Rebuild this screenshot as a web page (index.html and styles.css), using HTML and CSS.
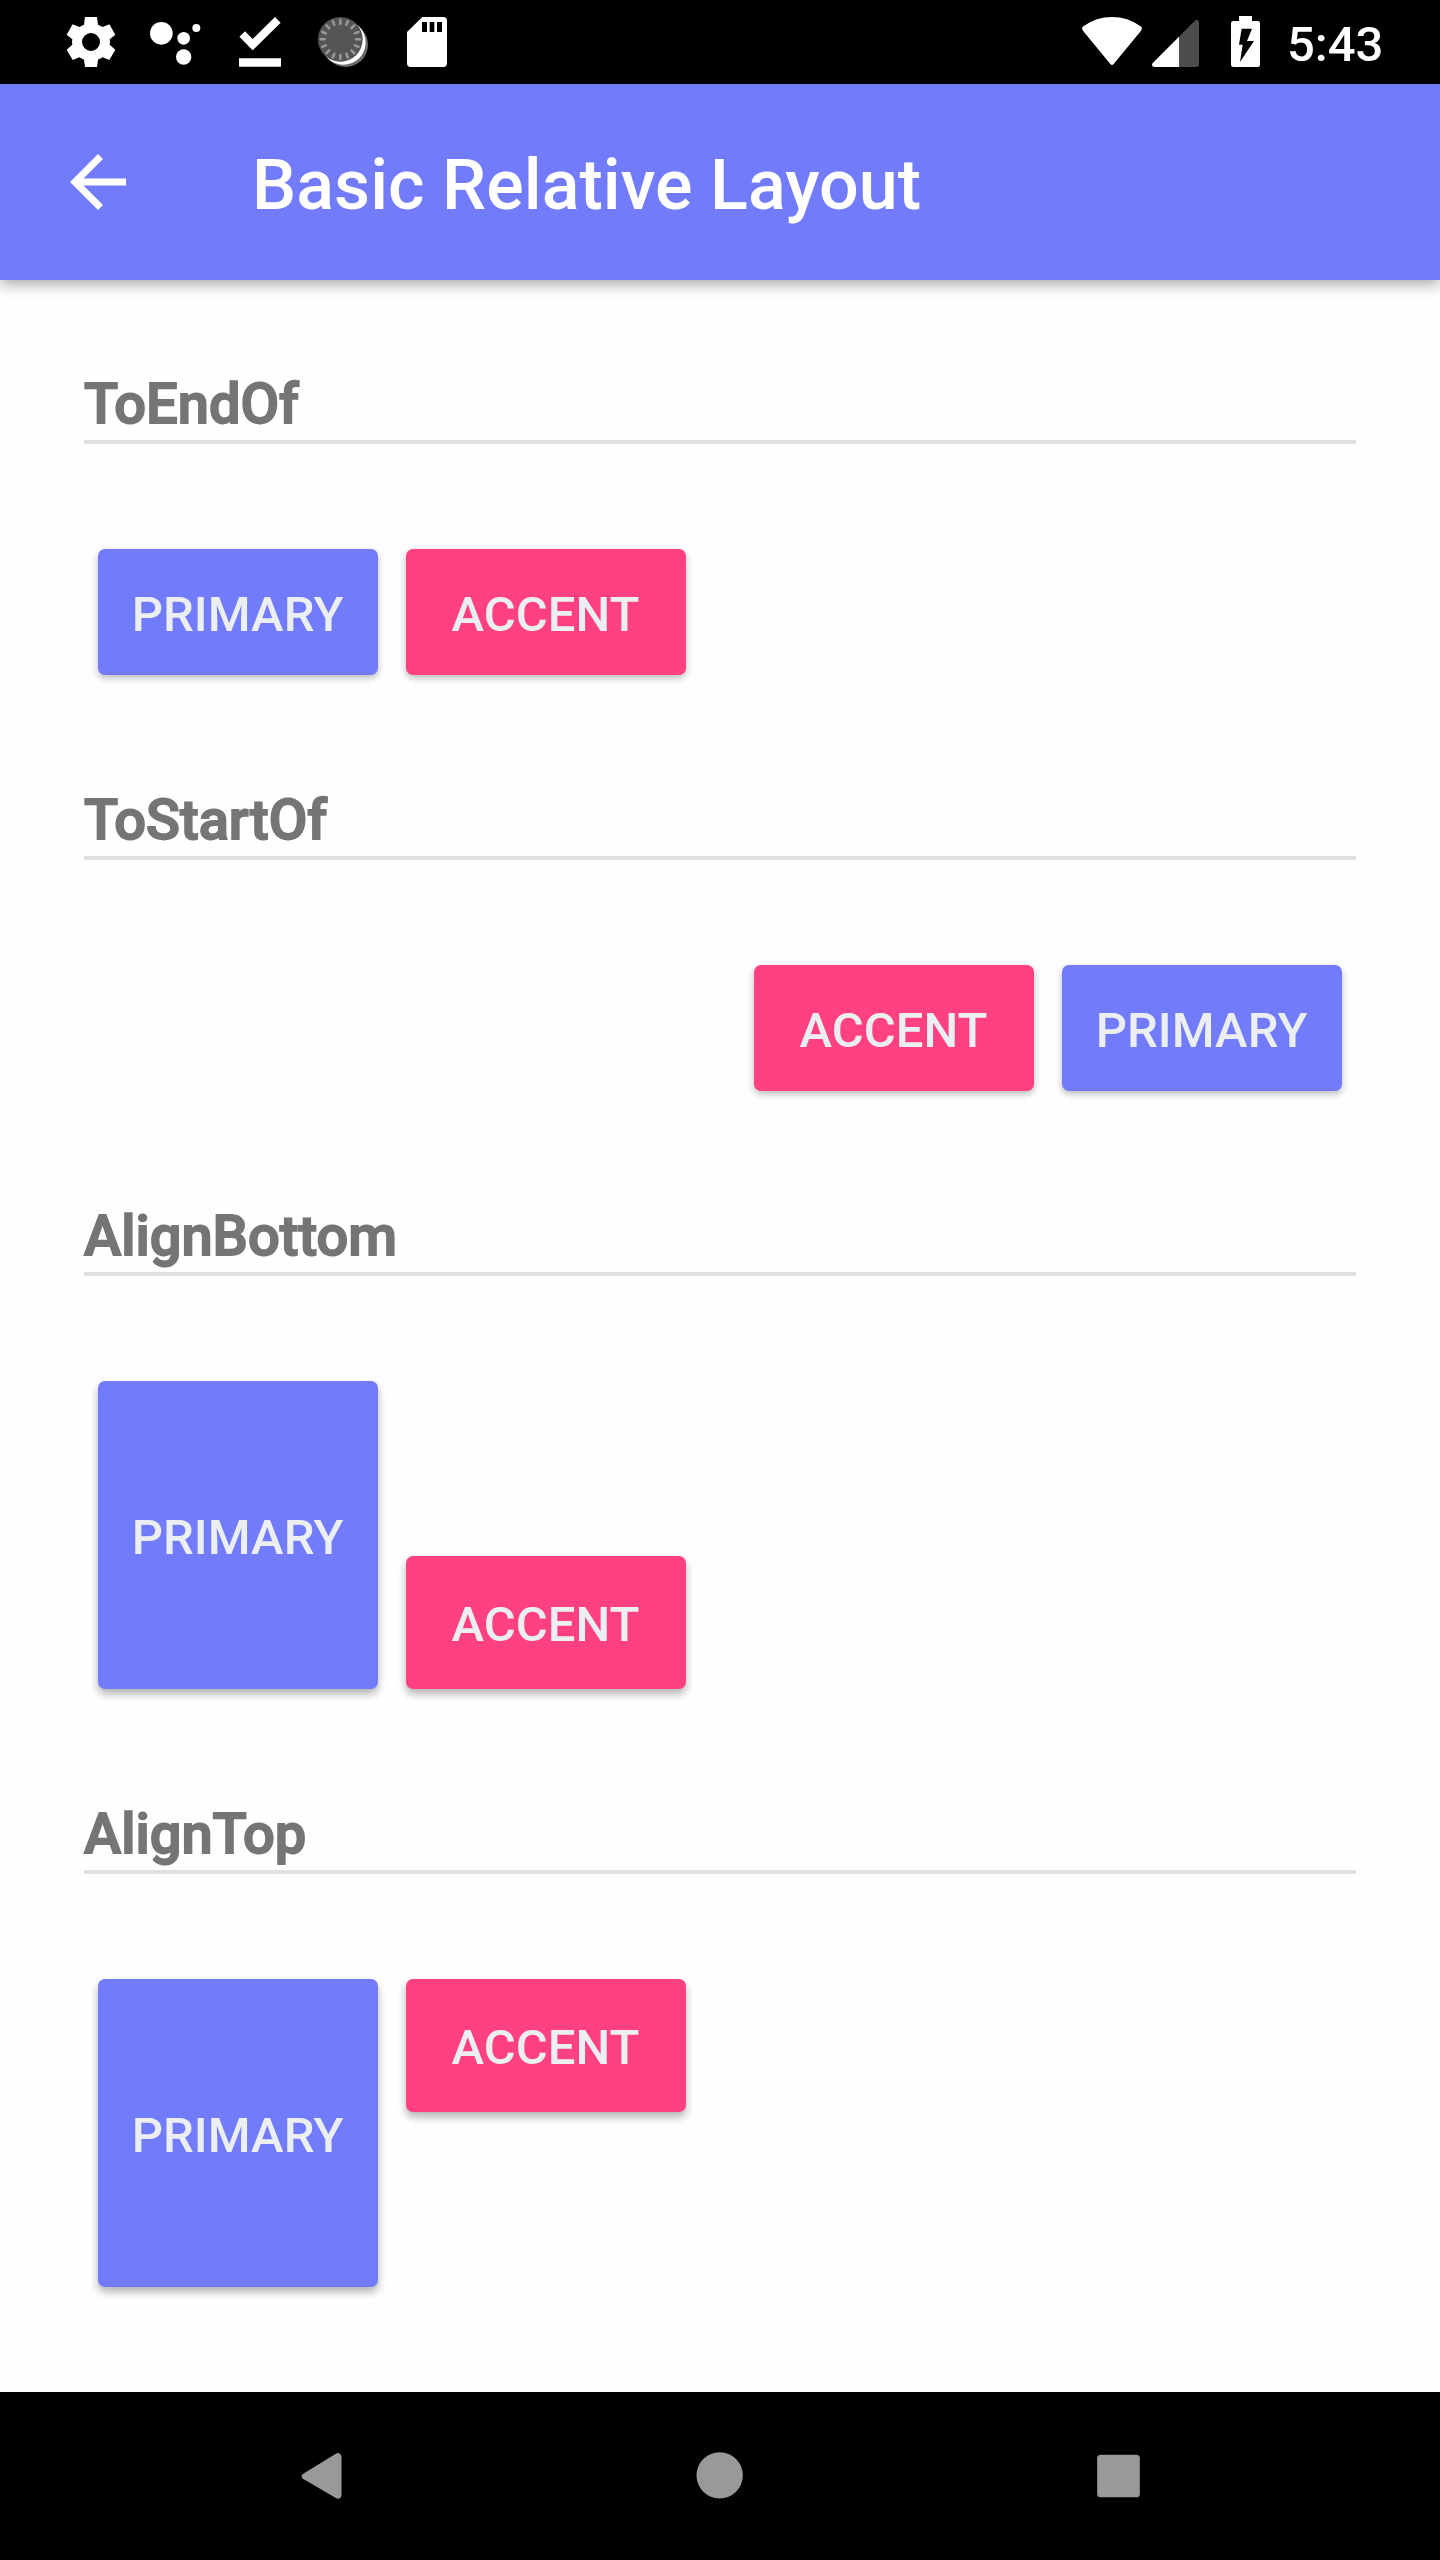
FILE: index.html
```html
<!DOCTYPE html>
<html lang="en">
<head>
<meta charset="utf-8">
<title>Basic Relative Layout</title>
<link rel="stylesheet" href="styles.css">
</head>
<body>
<header class="status">
  <div class="notifications">
    <svg class="note" viewBox="27 0 252 252"><path fill="#fff" fill-rule="evenodd" d="M135 51H171L174 74 188 81 208 73 226 104 209 118 210 126 209 134 226 149 208 180 188 172 174 179 171 201H135L132 179 118 172 98 180 80 149 97 134 96 126 97 118 80 104 98 73 118 81 132 74ZM153 99A27 27 0 1 0 153 153A27 27 0 1 0 153 99Z"/></svg>
    <svg class="note" viewBox="279 0 252 252" fill="#fff"><circle cx="364" cy="100" r="34"/><circle cx="431" cy="115" r="19"/><circle cx="469" cy="84" r="12"/><circle cx="431" cy="171" r="23"/></svg>
    <svg class="note" viewBox="531 0 252 252" fill="#fff"><path d="M598 110L615 94 638 117 705 51 722 68 638 151ZM597 175H723V200H597Z"/></svg>
    <svg class="note" viewBox="63 0 252 252">
      <circle cx="197" cy="134" r="67" fill="#6b6b6b"/><circle cx="190" cy="127" r="67" fill="#fff"/><circle cx="181" cy="118" r="67" fill="#555"/>
      <g stroke="#999" stroke-width="7.5" stroke-linecap="round">
        <g id="ticks"><path id="tick" d="M228 118H240M134 118H122M181 165V177M181 71V59"/><use href="#tick" transform="rotate(22.5 181 118)"/></g>
        <use href="#ticks" transform="rotate(45 181 118)"/>
      </g>
    </svg>
    <svg class="note" viewBox="315 0 252 252"><path fill="#fff" d="M427 51H490Q501 51 501 62V190Q501 201 490 201H392Q381 201 381 190V96Z"/><path d="M426 66H441V96H426ZM449 66H463V96H449ZM471 66H486V96H471Z"/></svg>
  </div>
  <div class="system">
    <svg class="signal" viewBox="60 0 192 252"><path fill="#fff" d="M70 79Q108 51 156 51T242 79Q249 84 243 92L161 192Q156 198 151 192L69 92Q63 84 70 79Z"/></svg>
    <svg class="signal" viewBox="252 0 192 252"><path fill="#4d4d4d" d="M357 110L403 64Q409 58 414 61 417 63 417 68V194Q417 201 410 201H357Z"/><path fill="#fff" d="M357 110V201H284Q277 201 276 196 275 192 279 188Z"/></svg>
    <svg class="battery" viewBox="480 0 144 252"><path fill="#fff" d="M537 48H576V63H593Q600 63 600 70V194Q600 201 593 201H520Q513 201 513 194V70Q513 63 520 63H537Z"/><path d="M545 86H576L561 123H582L540 186 548 134H537Z"/></svg>
    <span class="clock">5:43</span>
  </div>
</header>
<div class="appbar">
  <svg class="back" viewBox="0 0 56 56"><path fill="none" stroke="#fff" stroke-width="7" d="M56 28H6M30.5 2.500L5 28 30.500 53.500"/></svg>
  <h1 class="title">Basic Relative Layout</h1>
</div>
<main class="content">
  <section class="section">
    <h2 class="heading">ToEndOf</h2>
    <div class="row"><button class="btn primary">PRIMARY</button><button class="btn accent">ACCENT</button></div>
  </section>
  <section class="section">
    <h2 class="heading">ToStartOf</h2>
    <div class="row end"><button class="btn accent">ACCENT</button><button class="btn primary">PRIMARY</button></div>
  </section>
  <section class="section">
    <h2 class="heading">AlignBottom</h2>
    <div class="row bottom"><button class="btn raised primary tall">PRIMARY</button><button class="btn raised accent">ACCENT</button></div>
  </section>
  <section class="section">
    <h2 class="heading">AlignTop</h2>
    <div class="row"><button class="btn raised primary tall">PRIMARY</button><button class="btn raised accent">ACCENT</button></div>
  </section>
</main>
<nav class="navbar">
  <svg class="key" viewBox="58.5 66 252 504"><path d="M127 312L226 251Q232 247 238 251 243 254 243 260V376Q243 382 238 385 232 388 226 384L127 326Q119 319 127 312Z"/></svg>
  <svg class="key" viewBox="1254 66 252 504"><circle cx="1379" cy="316" r="69.500"/></svg>
  <svg class="key" viewBox="109.5 66 252 504"><rect x="170" y="254" width="128" height="128" rx="11"/></svg>
</nav>
</body>
</html>
```
FILE: styles.css
```css
* { box-sizing: border-box; }
body {
  margin: 0;
  width: 1440px;
  height: 2560px;
  display: flex;
  flex-direction: column;
  background: #fefefe;
  font-family: Roboto, sans-serif;
}
svg { display: block; flex: none; }

.status {
  height: 84px;
  flex: none;
  display: flex;
  justify-content: space-between;
  padding: 0 56px 0 49px;
  background: #000;
}
.notifications, .system { display: flex; }
.note { width: 84px; height: 84px; }
.signal { width: 64px; height: 84px; }
.battery { width: 48px; height: 84px; margin-left: 12px; }
.clock {
  width: 97px;
  margin-left: 19px;
  color: #fff;
  font-size: 49px;
  font-weight: 500;
  line-height: 90px;
  white-space: nowrap;
}

.appbar {
  height: 196px;
  flex: none;
  display: flex;
  align-items: center;
  gap: 126px;
  padding-left: 70px;
  background: #727cfb;
  box-shadow: 0 4px 14px rgba(0, 0, 0, 0.36);
}
.back { width: 56px; height: 56px; }
.title {
  margin: 6px 0 0;
  color: #fff;
  font-size: 70px;
  font-weight: 500;
  line-height: 82px;
  letter-spacing: 0.06px;
}

.content { flex: 1; padding: 84px 84px 0; }
.section { margin-bottom: 105px; }
.heading {
  height: 80px;
  margin: 0;
  border-bottom: 4px solid #e0e0e0;
  color: #757575;
  font-size: 56px;
  font-weight: 500;
  line-height: 80px;
  -webkit-text-stroke: 1.8px #757575;
}
.row {
  display: flex;
  align-items: flex-start;
  gap: 28px;
  padding: 105px 14px 0;
}
.end { justify-content: flex-end; }
.bottom { align-items: flex-end; }
.btn {
  width: 280px;
  height: 126px;
  padding: 6px 1px 0 0;
  border: 0;
  border-radius: 7px;
  color: #eceff1;
  font: 500 49px/58px Roboto, sans-serif;
  letter-spacing: 0.05px;
  box-shadow: 0 3px 7px rgba(0, 0, 0, 0.27);
}
.raised { height: 133px; padding-top: 4px; box-shadow: 0 5px 9px rgba(0, 0, 0, 0.3); }
.tall { height: 308px; padding-top: 5px; }
.primary { background: #727cfb; }
.accent { background: #ff4181; }

.navbar {
  height: 168px;
  flex: none;
  display: flex;
  justify-content: center;
  gap: 314.5px;
  background: #000;
}
.key { width: 84px; height: 168px; fill: #999; }
```
